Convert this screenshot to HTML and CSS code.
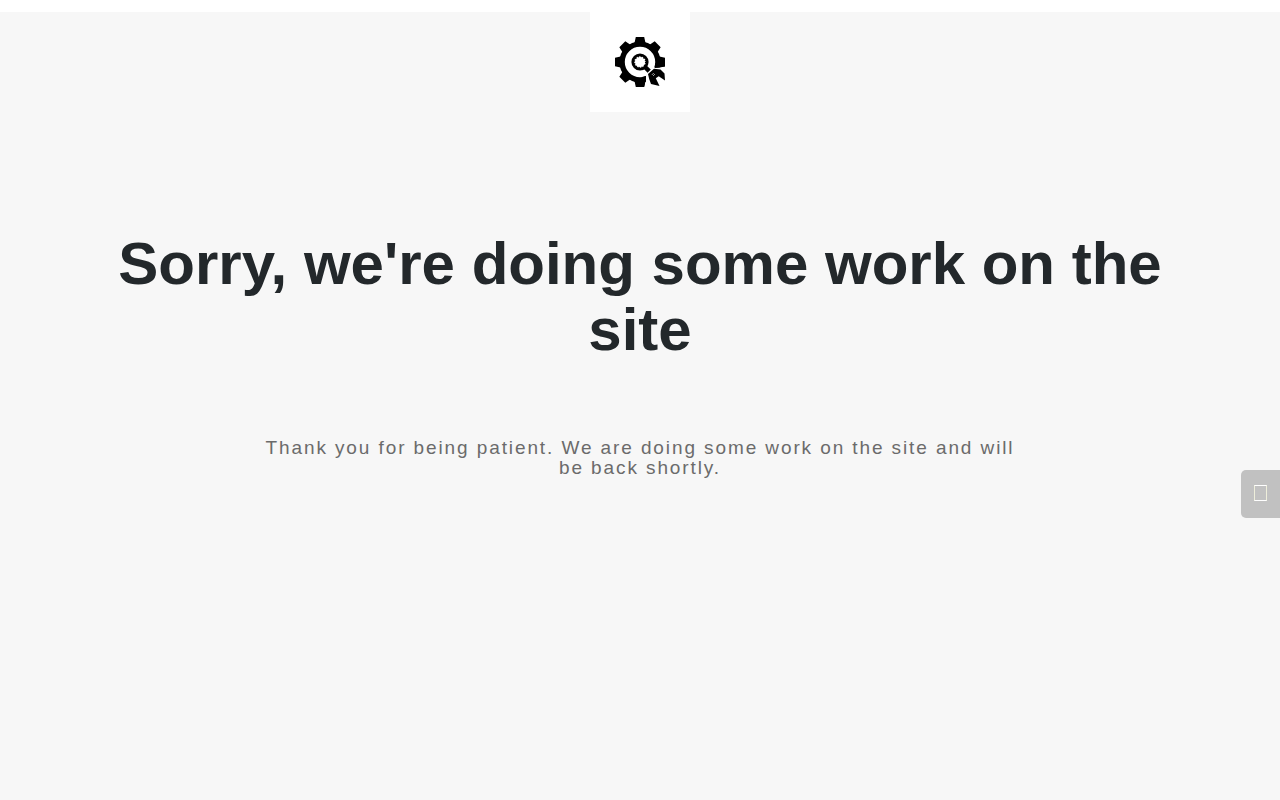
FILE: index.html
```
<!DOCTYPE html>
<html lang="en">
<head>
<meta charset="UTF-8">
<meta name="viewport" content="width=device-width, initial-scale=1.0">
<title>Site maintenance</title>
<link rel="stylesheet" href="styles.css">
</head>
<body>
<main class="page">
  <div class="logo">
    <svg width="50" height="50" viewBox="0 0 50 50">
      <g id="gear">
        <circle cx="25" cy="25" r="17.900" fill="none" stroke="#000" stroke-width="5.400"/>
        <path id="tooth" d="M16.500 7.500L19.600 5.500L20.800 0H29.200L30.400 5.500L33.500 7.500L30 9H20Z"/>
        <use href="#tooth" transform="rotate(45 25 25)"/>
        <use href="#tooth" transform="rotate(90 25 25)"/>
        <use href="#tooth" transform="rotate(180 25 25)"/>
        <use href="#tooth" transform="rotate(225 25 25)"/>
        <use href="#tooth" transform="rotate(270 25 25)"/>
        <use href="#tooth" transform="rotate(315 25 25)"/>
      </g>
      <path d="M33 33L39 30.500L50 30.500V50H31L31 39Z" fill="#fff"/>
      <path d="M40 26.500H43L50 27.500V29.500L43 30.800L40 31ZM27 40L31 39L30.700 43L29 50H26Z"/>
      <circle cx="25" cy="25" r="7.200" fill="none" stroke="#000" stroke-width="2.800"/>
      <circle cx="25" cy="25" r="5.600" fill="none" stroke="#000" stroke-width="1.200" stroke-dasharray="1.300 1.630"/>
      <path d="M29.500 29.500L34.200 34.200" stroke="#000" stroke-width="4.500"/>
      <path d="M33 37L39 31.700L45.500 32.500L49.500 36.500L50 43.500L43.700 39.300L40.800 41.300L44.500 49L36 47L34.200 42Z"/>
      <path d="M36.800 38L38.800 36M38 39L40 37" stroke="#fff" stroke-width=".6"/>
    </svg>
  </div>
  <h1>Sorry, we're doing some work on the site</h1>
  <p>Thank you for being patient. We are doing some work on the site and will be back shortly.</p>
</main>
<div class="side-tab"><span class="side-icon"></span></div>
</body>
</html>
```

FILE: styles.css
```
* {
  box-sizing: border-box;
}
body {
  margin: 0;
  border-top: 12px solid #fff;
  background: #f7f7f7;
  font-family: Arial, "Liberation Sans", sans-serif;
}
.page {
  min-height: 788px;
  display: flex;
  flex-direction: column;
  align-items: center;
  text-align: center;
}
.logo {
  width: 100px;
  height: 100px;
  padding: 25px;
  background: #fff;
}
.logo svg {
  display: block;
}
h1 {
  width: 1110px;
  margin: 119px 0 0;
  font-size: 60px;
  line-height: 66px;
  color: #23282b;
}
p {
  width: 760px;
  margin: 75px 0 0;
  font-size: 19px;
  line-height: 20px;
  letter-spacing: 1.9px;
  color: #6b6b6b;
}
.side-tab {
  position: fixed;
  top: 470px;
  right: 0;
  width: 39px;
  height: 48px;
  padding: 15px 13px;
  border-radius: 5px 0 0 5px;
  background: #c1c1c1;
}
.side-icon {
  display: block;
  width: 13px;
  height: 16px;
  border: 1px solid #fff;
  border-left-color: #eeeedb;
  border-right-color: #eeeedb;
}
```
